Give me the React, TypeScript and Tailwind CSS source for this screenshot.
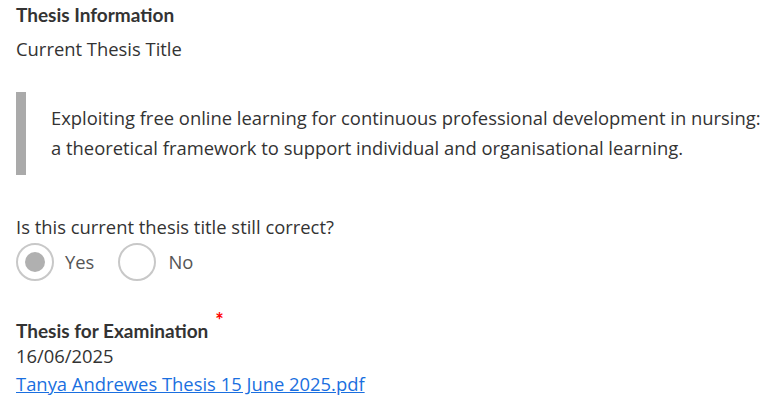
export default function App() {
  return (
    <div className="min-h-[417px] bg-white px-4 pt-[3px] text-[#333] [font-family:'Open_Sans',sans-serif]">
      <h2 className="text-[19px] font-bold leading-6 [font-family:Lato,sans-serif]">Thesis Information</h2>
      <p className="mt-[10px] text-[18.4px] leading-6">Current Thesis Title</p>

      <blockquote className="mt-[31px] border-l-[10px] border-[#aaa] pt-[11px] pb-[12px] pl-[25px] text-[18.4px] leading-[30px]">
        Exploiting free online learning for continuous professional development in nursing:
        <br />a theoretical framework to support individual and organisational learning.
      </blockquote>

      <fieldset className="mt-[40px]">
        <legend className="text-[18.4px] leading-6">Is this current thesis title still correct?</legend>
        <div className="mt-[4px] flex items-center">
          <label className="flex items-center gap-[11px]">
            <span className="flex h-[38px] w-[38px] items-center justify-center rounded-full border-2 border-[#c8c8c8]">
              <span className="h-[20px] w-[20px] rounded-full bg-[#b0b0b0]" />
            </span>
            <span className="text-[18.4px] text-[#555]">Yes</span>
          </label>
          <label className="ml-[24px] flex items-center gap-[12px]">
            <span className="h-[38px] w-[38px] rounded-full border-2 border-[#c8c8c8]" />
            <span className="text-[18.4px] text-[#555]">No</span>
          </label>
        </div>
      </fieldset>

      <div className="mt-[37px]">
        <h3 className="text-[19px] font-bold leading-6 [font-family:Lato,sans-serif]">
          Thesis for Examination
          <span className="relative -top-[10px] ml-[7px] text-[20px] font-bold text-[#f00]">*</span>
        </h3>
        <p className="text-[18.4px] leading-[26px]">16/06/2025</p>
        <a href="#" className="text-[18.4px] leading-[29px] text-[#1a6fe0] underline">
          Tanya Andrewes Thesis 15 June 2025.pdf
        </a>
      </div>
    </div>
  );
}
